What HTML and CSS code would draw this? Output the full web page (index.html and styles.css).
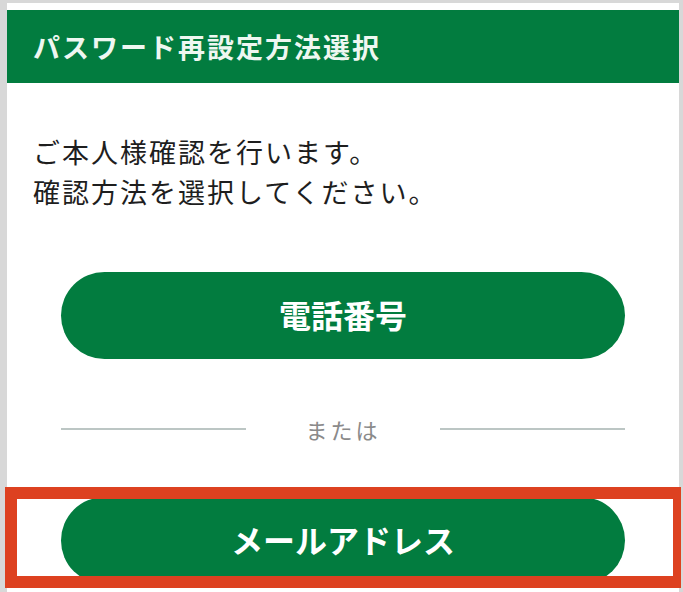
FILE: index.html
```html
<!DOCTYPE html>
<html lang="ja">
<head>
<meta charset="utf-8">
<title>パスワード再設定方法選択</title>
<link rel="stylesheet" href="styles.css">
</head>
<body>
<div class="screen">
  <div class="panel">
    <header class="title-bar">
      <h1 class="title">パスワード再設定方法選択</h1>
    </header>
    <main class="content">
      <p class="lead">ご本人様確認を行います。<br>確認方法を選択してください。</p>
      <div class="choices">
        <button class="choice" type="button">電話番号</button>
        <div class="or-row">
          <span class="or-line"></span>
          <span class="or-text">または</span>
          <span class="or-line"></span>
        </div>
        <button class="choice" type="button">メールアドレス</button>
      </div>
    </main>
  </div>
  <div class="highlight"></div>
</div>
</body>
</html>
```

FILE: styles.css
```css
* { box-sizing: border-box; }
html, body {
  margin: 0;
  padding: 0;
  height: 100%;
  overflow: hidden;
}
body {
  background: #d8d8d8;
  font-family: "Noto Sans CJK JP", "Noto Sans", sans-serif;
  color: #222222;
}
.screen {
  position: relative;
  height: 592px;
  padding: 3px 4px 0 7px;
}
.panel {
  background: #ffffff;
  height: 100%;
  padding-top: 7px;
}
.title-bar {
  background: #027c3f;
  height: 73px;
  display: flex;
  align-items: center;
  padding-left: 26px;
}
.title {
  margin: 0;
  font-size: 27px;
  font-weight: 700;
  letter-spacing: 2px;
  color: #eef7f1;
  line-height: 1;
}
.content {
  padding: 49px 54px 0 26px;
}
.lead {
  margin: 0;
  font-size: 27px;
  line-height: 40px;
  letter-spacing: 2px;
  color: #1e1e1e;
}
.choices {
  margin-left: 28px;
  padding-top: 60px;
  display: flex;
  flex-direction: column;
}
.choice {
  display: block;
  width: 100%;
  height: 87px;
  border: none;
  border-radius: 44px;
  background: #027c3f;
  color: #ffffff;
  font-family: "Noto Sans CJK JP", "Noto Sans", sans-serif;
  font-size: 32px;
  font-weight: 700;
  padding: 0 0 4px;
}
.or-row {
  height: 30px;
  margin: 55px 0 53px;
  display: flex;
  align-items: center;
}
.or-line {
  flex: 1;
  height: 2px;
  background: #bcc6c4;
}
.or-text {
  width: 194px;
  text-align: center;
  font-size: 22px;
  letter-spacing: 3px;
  color: #8a8a8a;
  line-height: 30px;
}
.highlight {
  position: absolute;
  left: 5px;
  top: 487px;
  width: 676px;
  height: 101px;
  border: 12px solid #dd4120;
  border-right-width: 8px;
}
```
